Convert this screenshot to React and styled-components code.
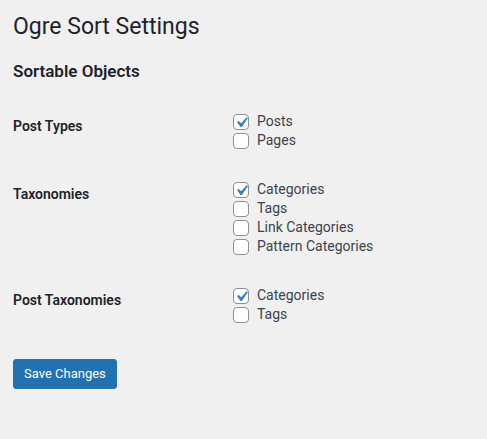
import React, { useState } from "react";
import styled, { createGlobalStyle } from "styled-components";

const GlobalStyle = createGlobalStyle`
  body {
    margin: 0;
    background: #f0f0f1;
    color: #3c434a;
    font-family: Roboto, "Liberation Sans", sans-serif;
    font-size: 13px;
  }
`;

const Wrap = styled.div`
  padding: 0 13px;
`;

const Title = styled.h1`
  margin: 0;
  padding: 12px 0 4px;
  font-size: 23px;
  font-weight: 400;
  line-height: 30px;
  color: #1d2327;
`;

const SectionTitle = styled.h2`
  margin: 14px 0 15px;
  font-size: 17px;
  font-weight: 600;
  line-height: 22px;
  color: #1d2327;
`;

const Table = styled.div`
  display: grid;
  grid-template-columns: 210px 1fr;
`;

const RowLabel = styled.div`
  padding: 20px 10px 20px 0;
  font-size: 14px;
  font-weight: 600;
  line-height: 18px;
  color: #1d2327;
`;

const RowField = styled.div`
  padding: 15px 10px;
  display: flex;
  flex-direction: column;
`;

const Option = styled.label`
  display: flex;
  align-items: center;
  gap: 8px;
  font-size: 14px;
  line-height: 19px;
  color: #3c434a;
  cursor: pointer;
`;

const Box = styled.span`
  position: relative;
  width: 16px;
  height: 16px;
  box-sizing: border-box;
  border: 1px solid #8c8f94;
  border-radius: 4px;
  background: #fff;
  flex-shrink: 0;

  svg {
    position: absolute;
    left: -3px;
    top: -3px;
  }
`;

const Hidden = styled.input`
  display: none;
`;

const Button = styled.button`
  margin-top: 20px;
  height: 30px;
  padding: 0 10px;
  border: 1px solid #2271b1;
  border-radius: 3px;
  background: #2271b1;
  color: #fff;
  font-family: inherit;
  font-size: 13px;
  line-height: 28px;
  cursor: pointer;
`;

const Check = ({ label, initial }) => {
  const [on, setOn] = useState(initial);
  return (
    <Option>
      <Hidden type="checkbox" checked={on} onChange={() => setOn(!on)} />
      <Box>
        {on && (
          <svg width="21" height="21" viewBox="0 0 20 20">
            <path
              d="M14.83 4.89l1.34.94-5.81 8.38H9.02L5.78 9.67l1.34-1.25 2.57 2.4z"
              fill="#3582c4"
            />
          </svg>
        )}
      </Box>
      {label}
    </Option>
  );
};

const rows = [
  { label: "Post Types", options: [["Posts", true], ["Pages", false]] },
  {
    label: "Taxonomies",
    options: [
      ["Categories", true],
      ["Tags", false],
      ["Link Categories", false],
      ["Pattern Categories", false],
    ],
  },
  { label: "Post Taxonomies", options: [["Categories", true], ["Tags", false]] },
];

export default function App() {
  return (
    <>
      <GlobalStyle />
      <Wrap>
        <Title>Ogre Sort Settings</Title>
        <SectionTitle>Sortable Objects</SectionTitle>
        <Table>
          {rows.map((row) => (
            <React.Fragment key={row.label}>
              <RowLabel>{row.label}</RowLabel>
              <RowField>
                {row.options.map(([name, on]) => (
                  <Check key={name} label={name} initial={on} />
                ))}
              </RowField>
            </React.Fragment>
          ))}
        </Table>
        <Button>Save Changes</Button>
      </Wrap>
    </>
  );
}
